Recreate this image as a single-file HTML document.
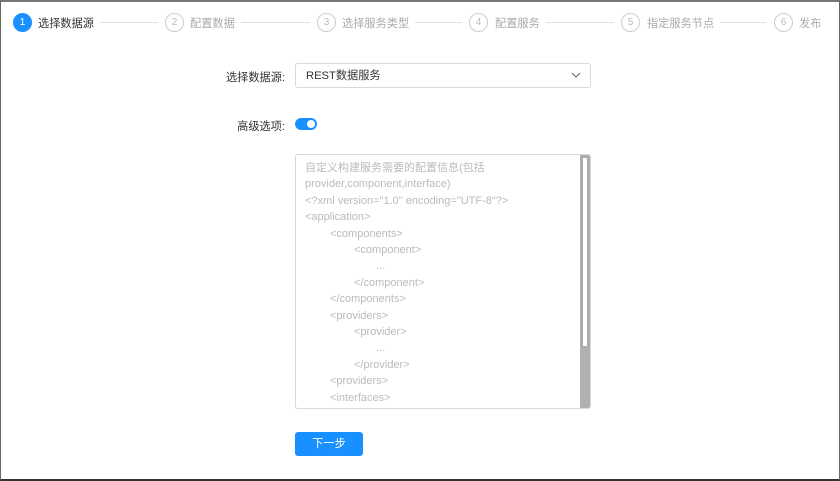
<!DOCTYPE html>
<html><head><meta charset="utf-8"><style>
*{box-sizing:border-box;margin:0;padding:0}
body{width:840px;height:481px;background:#fff;font-family:"Liberation Sans","Noto Sans CJK SC",sans-serif;position:relative;overflow:hidden}
.fr{position:absolute;left:0;top:0;width:840px;height:481px;border:1px solid #666;border-top:2px solid #777;border-bottom:2px solid #333;pointer-events:none}
.c{position:absolute;top:13px;width:19px;height:19px;border-radius:50%;border:1px solid #ccc;color:#bbb;font-size:10px;text-align:center;line-height:17px}
.c.a{background:#1890ff;border-color:#1890ff;color:#fff}
.l{position:absolute;top:16px;font-size:11.2px;color:#aaa;line-height:16px}
.l.a{color:#333}
.ln{position:absolute;top:22px;height:1px;background:#e0e0e0}
.lab{position:absolute;right:555px;font-size:11.2px;color:#333}
.sel{position:absolute;left:295px;top:63px;width:296px;height:25px;border:1px solid #d9d9d9;border-radius:3px;font-size:11.2px;color:#333;padding-left:10px;line-height:24px}
.ta{position:absolute;left:295px;top:154px;width:296px;height:255px;border:1px solid #d9d9d9;border-radius:3px;overflow:hidden;padding-top:5px}
.ta div{font-size:11px;color:#bbb;line-height:16.4px;padding-left:9px;white-space:pre}
.ta .i1{padding-left:34px}.ta .i2{padding-left:58px}.ta .i3{padding-left:80px}
.sb{position:absolute;right:0;top:0;width:10px;height:100%;background:#b0b0b0;padding:0!important}
.th{position:absolute;right:1px;top:1px;width:8px;height:192px;background:#fff;border:2px solid #aaa;border-radius:2px;padding:0!important}
.btn{position:absolute;left:295px;top:432px;width:68px;height:24px;background:#1890ff;border-radius:3px;color:#fff;font-size:11.2px;text-align:center;line-height:25px}
</style></head><body>
<div class="c a" style="left:13px">1</div><div class="l a" style="left:38px">选择数据源</div><div class="ln" style="left:100px;width:58px"></div>
<div class="c" style="left:165px">2</div><div class="l" style="left:190px">配置数据</div><div class="ln" style="left:241px;width:69px"></div>
<div class="c" style="left:317px">3</div><div class="l" style="left:342px">选择服务类型</div><div class="ln" style="left:415px;width:47px"></div>
<div class="c" style="left:469px">4</div><div class="l" style="left:495px">配置服务</div><div class="ln" style="left:546px;width:68px"></div>
<div class="c" style="left:621px">5</div><div class="l" style="left:647px">指定服务节点</div><div class="ln" style="left:720px;width:46px"></div>
<div class="c" style="left:774px">6</div><div class="l" style="left:799px">发布</div>
<div class="lab" style="top:69px">选择数据源:</div>
<div class="sel">REST数据服务<svg style="position:absolute;right:9px;top:8px" width="10" height="7" viewBox="0 0 10 7"><path d="M1 1l4 4 4-4" fill="none" stroke="#666" stroke-width="1.1"/></svg></div>
<div class="lab" style="top:118px">高级选项:</div>
<div style="position:absolute;left:295px;top:118px;width:22px;height:12px;border-radius:6px;background:#1890ff"><div style="position:absolute;right:2px;top:2px;width:8px;height:8px;border-radius:50%;background:#fff"></div></div>
<div class="ta">
<div>自定义构建服务需要的配置信息(包括</div>
<div>provider,component,interface)</div>
<div>&lt;?xml version="1.0" encoding="UTF-8"?&gt;</div>
<div>&lt;application&gt;</div>
<div class="i1">&lt;components&gt;</div>
<div class="i2">&lt;component&gt;</div>
<div class="i3">...</div>
<div class="i2">&lt;/component&gt;</div>
<div class="i1">&lt;/components&gt;</div>
<div class="i1">&lt;providers&gt;</div>
<div class="i2">&lt;provider&gt;</div>
<div class="i3">...</div>
<div class="i2">&lt;/provider&gt;</div>
<div class="i1">&lt;providers&gt;</div>
<div class="i1">&lt;interfaces&gt;</div>
<div class="sb"><div class="th"></div></div></div>
<div class="btn">下一步</div>
<div class="fr"></div>
</body></html>
